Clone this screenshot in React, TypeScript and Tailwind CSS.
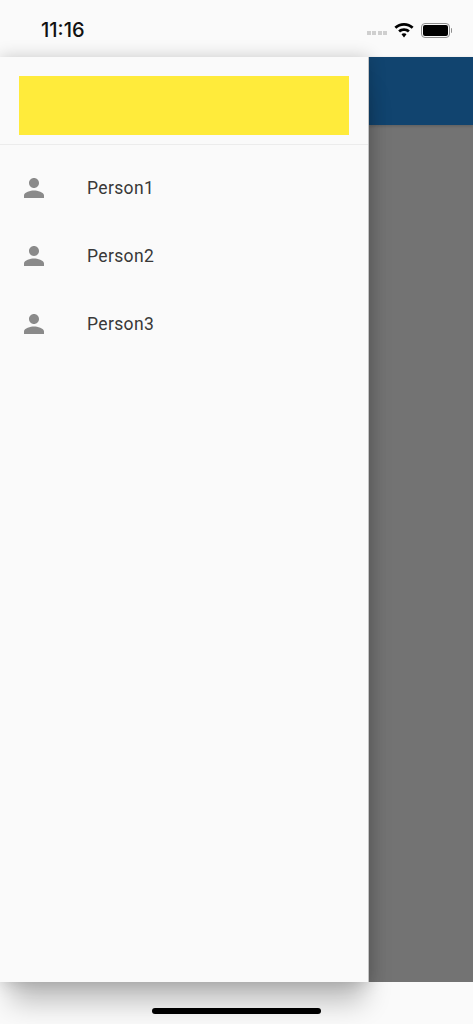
const people = ['Person1', 'Person2', 'Person3'];

function PersonIcon() {
  return (
    <svg width="30" height="30" viewBox="0 0 24 24" fill="#8a8a8a" className="shrink-0">
      <path d="M12 12c2.21 0 4-1.79 4-4s-1.79-4-4-4-4 1.79-4 4 1.79 4 4 4zm0 2c-2.67 0-8 1.34-8 4v2h16v-2c0-2.66-5.33-4-8-4z" />
    </svg>
  );
}

function StatusBar() {
  return (
    <div className="flex h-[57px] shrink-0 items-center justify-between bg-[#fafafa] pl-[41px] pr-[21px] pt-[3px]">
      <span className="font-['Inter',sans-serif] text-[20px] font-medium text-[#111]">11:16</span>
      <div className="flex items-center">
        {/* signal dots */}
        <div className="mt-[5px] mr-[7px] flex gap-[1.5px]">
          {[0, 1, 2, 3].map((i) => (
            <div key={i} className="h-[4px] w-[4px] bg-[#cfcfcf]" />
          ))}
        </div>
        <svg width="20" height="15" viewBox="0 0 20 15" className="mr-[7px]">
          <path d="M10 0C6.3 0 3 1.4.4 3.8l1.9 2C4.4 3.9 7 2.8 10 2.8s5.6 1.1 7.7 3l1.9-2C17 1.4 13.7 0 10 0z" />
          <path d="M10 5.2c-2.2 0-4.3.8-5.8 2.3l1.9 1.9c1-1 2.4-1.5 3.9-1.5s2.9.5 3.9 1.5l1.9-1.9C14.3 6 12.2 5.2 10 5.2z" />
          <path d="M10 10.2c-1 0-1.9.4-2.5 1L10 14.6l2.5-3.4c-.6-.6-1.5-1-2.5-1z" />
        </svg>
        <div className="flex items-center">
          <div className="flex h-[15px] w-[29px] items-center justify-center rounded-[4px] border border-[#8f8f8f]">
            <div className="h-[11px] w-[25px] rounded-[2px] bg-black" />
          </div>
          <div className="ml-[1px] h-[5px] w-[1px] rounded-r-full bg-[#8f8f8f]" />
        </div>
      </div>
    </div>
  );
}

export default function App() {
  return (
    <div className="flex h-[1024px] w-[473px] flex-col overflow-hidden bg-[#fafafa]">
      <StatusBar />

      <div className="flex h-[925px] shrink-0">
        {/* Drawer */}
        <div className="relative z-10 flex w-[369px] shrink-0 flex-col border-r border-[#c4c4c4] bg-[#fafafa] shadow-[3px_28px_26px_-8px_rgba(0,0,0,0.24),0_0_16px_rgba(0,0,0,0.2)]">
          <div className="border-b border-[#ececec] px-[19px] pb-[9px] pt-[19px]">
            <div className="h-[59px] w-[330px] bg-[#ffeb3b]" />
          </div>
          <div className="pt-[9px]">
            {people.map((name) => (
              <div key={name} className="flex h-[68px] items-center pl-[19px]">
                <PersonIcon />
                <span className="ml-[38px] mt-[1px] font-['Roboto',sans-serif] text-[17.5px] font-[450] tracking-[0.35px] text-[#383838]">
                  {name}
                </span>
              </div>
            ))}
          </div>
        </div>

        {/* Dimmed page behind the drawer */}
        <div className="flex flex-1 flex-col bg-[#737373]">
          <div className="h-[68px] bg-[#11446f] shadow-[0_1px_3px_rgba(0,0,0,0.2)]" />
        </div>
      </div>

      <div className="relative z-20 flex flex-1 justify-center pt-[26px]">
        <div className="h-[6px] w-[169px] rounded-full bg-black" />
      </div>
    </div>
  );
}
